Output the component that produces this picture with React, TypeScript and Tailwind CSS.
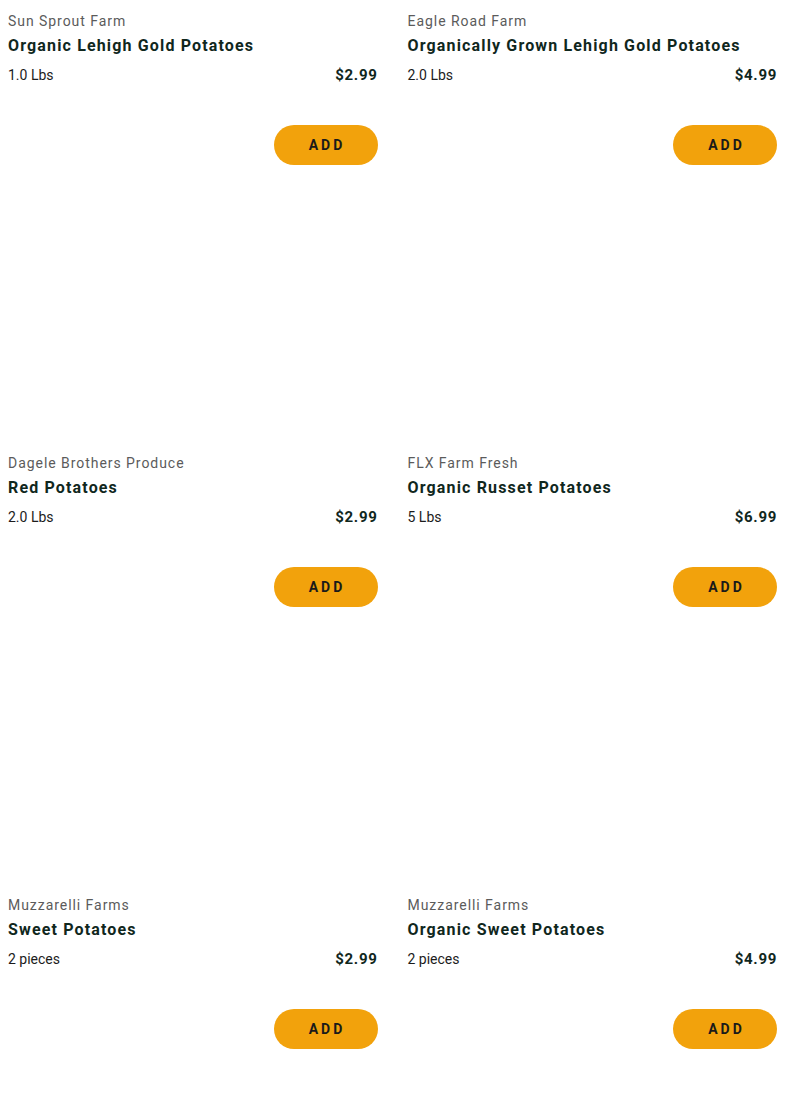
import React from 'react';

type Product = {
  farm: string;
  name: string;
  size: string;
  price: string;
};

const products: Product[] = [
  { farm: 'Sun Sprout Farm', name: 'Organic Lehigh Gold Potatoes', size: '1.0 Lbs', price: '$2.99' },
  { farm: 'Eagle Road Farm', name: 'Organically Grown Lehigh Gold Potatoes', size: '2.0 Lbs', price: '$4.99' },
  { farm: 'Dagele Brothers Produce', name: 'Red Potatoes', size: '2.0 Lbs', price: '$2.99' },
  { farm: 'FLX Farm Fresh', name: 'Organic Russet Potatoes', size: '5 Lbs', price: '$6.99' },
  { farm: 'Muzzarelli Farms', name: 'Sweet Potatoes', size: '2 pieces', price: '$2.99' },
  { farm: 'Muzzarelli Farms', name: 'Organic Sweet Potatoes', size: '2 pieces', price: '$4.99' },
];

function ProductCard({ p }: { p: Product }) {
  return (
    <div className="h-[442px] pt-[11px] flex flex-col">
      <div className="text-sm leading-5 text-[#5b5b5b] tracking-[0.95px]">{p.farm}</div>
      <div className="mt-[5px] text-base leading-5 font-bold text-[#10271d] tracking-[1.15px]">{p.name}</div>
      <div className="mt-[9px] flex items-center justify-between leading-5">
        <span className="text-sm text-[#1c1c1c]">{p.size}</span>
        <span className="text-[15px] font-bold text-[#10271d] tracking-[0.7px]">{p.price}</span>
      </div>
      <div className="mt-[40px] flex justify-end">
        <button className="h-10 w-[104px] rounded-full bg-[#f2a20c] text-sm font-bold tracking-[3px] text-[#1a1a1a] pl-[3px]">
          ADD
        </button>
      </div>
    </div>
  );
}

export default function App() {
  return (
    <div className="min-h-screen bg-white px-2 font-['Roboto',sans-serif]">
      <div className="grid grid-cols-2 gap-x-[30px] w-[769px]">
        {products.map((p, i) => (
          <ProductCard key={i} p={p} />
        ))}
      </div>
    </div>
  );
}
